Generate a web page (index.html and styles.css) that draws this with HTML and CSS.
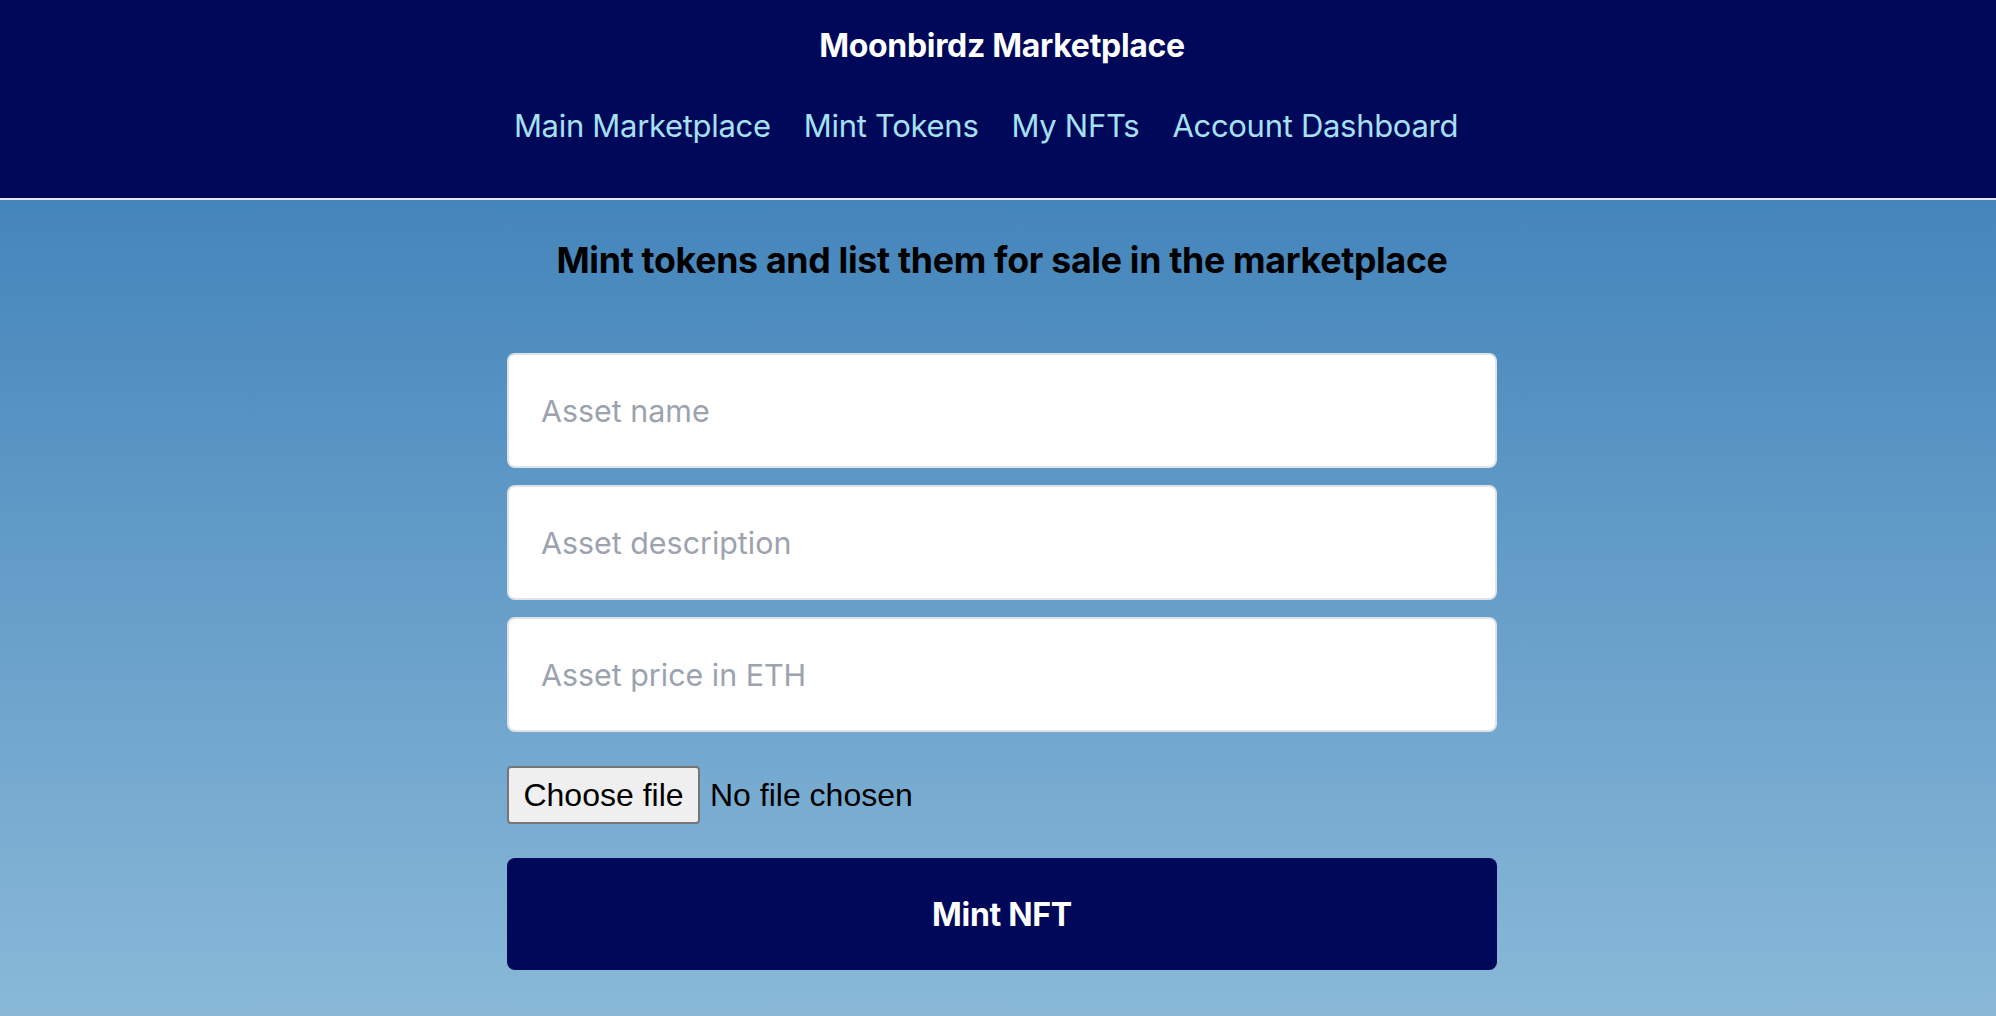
FILE: index.html
```html
<!DOCTYPE html>
<html lang="en">
<head>
<meta charset="utf-8">
<title>Moonbirdz Marketplace</title>
<link rel="stylesheet" href="styles.css">
</head>
<body>
<header class="topbar">
  <p class="brand">Moonbirdz Marketplace</p>
  <nav class="nav">
    <a href="#" class="nav-link">Main Marketplace</a>
    <a href="#" class="nav-link">Mint Tokens</a>
    <a href="#" class="nav-link">My NFTs</a>
    <a href="#" class="nav-link">Account Dashboard</a>
  </nav>
</header>
<main class="main">
  <h1 class="heading">Mint tokens and list them for sale in the marketplace</h1>
  <div class="form-wrap">
    <form class="form">
      <input class="field" type="text" placeholder="Asset name">
      <input class="field" type="text" placeholder="Asset description">
      <input class="field" type="text" placeholder="Asset price in ETH">
      <label class="file">
        <span class="file-btn">Choose file</span>
        <span class="file-text">No file chosen</span>
      </label>
      <button type="button" class="mint">Mint NFT</button>
    </form>
  </div>
</main>
</body>
</html>
```
FILE: styles.css
```css
* { box-sizing: border-box; }
html, body { margin: 0; padding: 0; }
body {
  font-family: Inter, "Noto Sans", sans-serif;
  height: 1016px;
  overflow: hidden;
  background: linear-gradient(to bottom, #4485bb 200px, #8ab9d8 1016px);
}
.topbar {
  background: #00085a;
  height: 200px;
  border-bottom: 2px solid #e5e7eb;
  display: flex;
  flex-direction: column;
  align-items: center;
  padding-top: 25px;
}
.brand {
  margin: 0;
  padding-left: 8px;
  color: #ffffff;
  font-weight: 700;
  font-size: 32px;
  line-height: 42px;
  letter-spacing: -0.3px;
}
.nav {
  display: flex;
  gap: 33px;
  margin-top: 38px;
  padding-right: 24px;
}
.nav-link {
  color: #a6e0f2;
  text-decoration: none;
  font-size: 31px;
  line-height: 42px;
  letter-spacing: -0.3px;
}
.main {
  display: flex;
  flex-direction: column;
  align-items: center;
}
.heading {
  margin: 37px 0 0;
  padding-left: 8px;
  font-size: 35.7px;
  line-height: 46px;
  font-weight: 700;
  color: #000;
  letter-spacing: -0.3px;
}
.form-wrap {
  display: flex;
  justify-content: center;
  width: 100%;
  padding-left: 8px;
  margin-top: 70px;
}
.form {
  width: 990px;
  display: flex;
  flex-direction: column;
}
.field {
  height: 115px;
  margin: 0 0 17px;
  border: 2px solid #dfe3e8;
  border-radius: 8px;
  background: #fff;
  padding: 0 32px;
  font-family: Inter, "Noto Sans", sans-serif;
  font-size: 30.4px;
  color: #111;
  outline: none;
}
.field::placeholder { color: #9ca3af; }
.file {
  display: flex;
  align-items: center;
  gap: 10px;
  margin-top: 17px;
  font-family: "Liberation Sans", Arial, sans-serif;
  font-size: 32px;
  color: #000;
}
.file-btn {
  display: flex;
  align-items: center;
  height: 58px;
  width: 193px;
  justify-content: center;
  background: #efefef;
  border: 2px solid #767676;
  border-radius: 4px;
}
.mint {
  margin-top: 34px;
  height: 112px;
  border: none;
  border-radius: 8px;
  background: #00085a;
  color: #fff;
  font-family: Inter, "Noto Sans", sans-serif;
  font-weight: 700;
  font-size: 32px;
  letter-spacing: -0.3px;
}
```
